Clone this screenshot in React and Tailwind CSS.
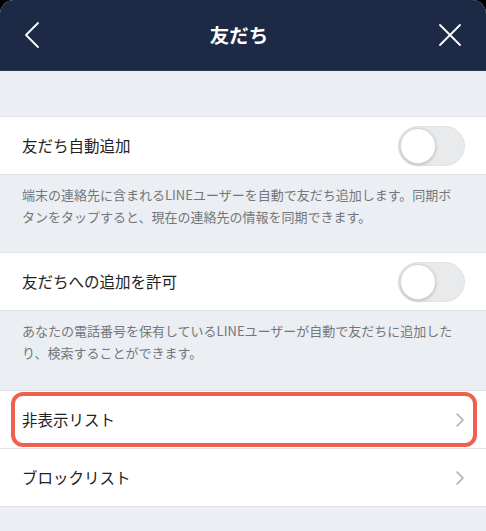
import React from "react";

const font = { fontFamily: '"Noto Sans CJK JP", "Noto Sans", sans-serif' };

const Toggle = () => (
  <div className="relative w-[67px] h-[40px] rounded-full bg-[#e9eaeb] border border-[#e2e3e4]">
    <div className="absolute left-[1px] top-[1px] w-[36px] h-[36px] rounded-full bg-white border border-[#d6d7d8] shadow-[0_1px_3px_rgba(0,0,0,0.2)]" />
  </div>
);

const Chevron = () => (
  <svg width="10" height="16" viewBox="0 0 10 16" fill="none">
    <polyline points="2,2 8,8 2,14" stroke="#aab0b5" strokeWidth="1.6" strokeLinecap="round" strokeLinejoin="round" />
  </svg>
);

const Row = ({ label, right, children }) => (
  <div className="relative h-[58px] bg-white flex items-center justify-between pl-[22px] pr-[21px] border-b border-[#dfe2e6]">
    <span className="text-[15.5px] text-[#222]">{label}</span>
    {right}
    {children}
  </div>
);

const Desc = ({ lines, h }) => (
  <div className={`${h} px-[22px] pt-[9px] border-b border-[#dfe2e6] text-[13px] leading-[22px] text-[#73777c] whitespace-nowrap`}>
    {lines.map((l, i) => (
      <div key={i}>{l}</div>
    ))}
  </div>
);

export default function App() {
  return (
    <div className="bg-black w-[486px] h-[531px]" style={font}>
      <div className="w-[486px] h-[531px] rounded-t-[14px] overflow-hidden bg-[#ebeef2]">
        <div className="h-[71px] bg-[#1c2a45] flex items-center justify-between px-[24px] border-b border-[#2c3a55]">
          <svg width="16" height="28" viewBox="0 0 16 28" fill="none">
            <polyline points="14,2 2,14 14,26" stroke="white" strokeWidth="1.8" strokeLinecap="round" strokeLinejoin="round" />
          </svg>
          <span className="text-white text-[19.5px] font-bold">友だち</span>
          <svg width="24" height="24" viewBox="0 0 24 24" fill="none">
            <line x1="2" y1="2" x2="22" y2="22" stroke="white" strokeWidth="1.8" strokeLinecap="round" />
            <line x1="22" y1="2" x2="2" y2="22" stroke="white" strokeWidth="1.8" strokeLinecap="round" />
          </svg>
        </div>
        <div className="h-[46px] border-b border-[#dfe2e6]" />
        <Row label="友だち自動追加" right={<Toggle />} />
        <Desc
          h="h-[78px]"
          lines={[
            "端末の連絡先に含まれるLINEユーザーを自動で友だち追加します。同期ボ",
            "タンをタップすると、現在の連絡先の情報を同期できます。",
          ]}
        />
        <Row label="友だちへの追加を許可" right={<Toggle />} />
        <Desc
          h="h-[80px]"
          lines={[
            "あなたの電話番号を保有しているLINEユーザーが自動で友だちに追加した",
            "り、検索することができます。",
          ]}
        />
        <Row label="非表示リスト" right={<Chevron />}>
          <div className="absolute left-[11px] right-[9px] top-[1px] bottom-[1px] rounded-[12px] border-[4px] border-[#f0604f]" />
        </Row>
        <Row label="ブロックリスト" right={<Chevron />} />
      </div>
    </div>
  );
}
